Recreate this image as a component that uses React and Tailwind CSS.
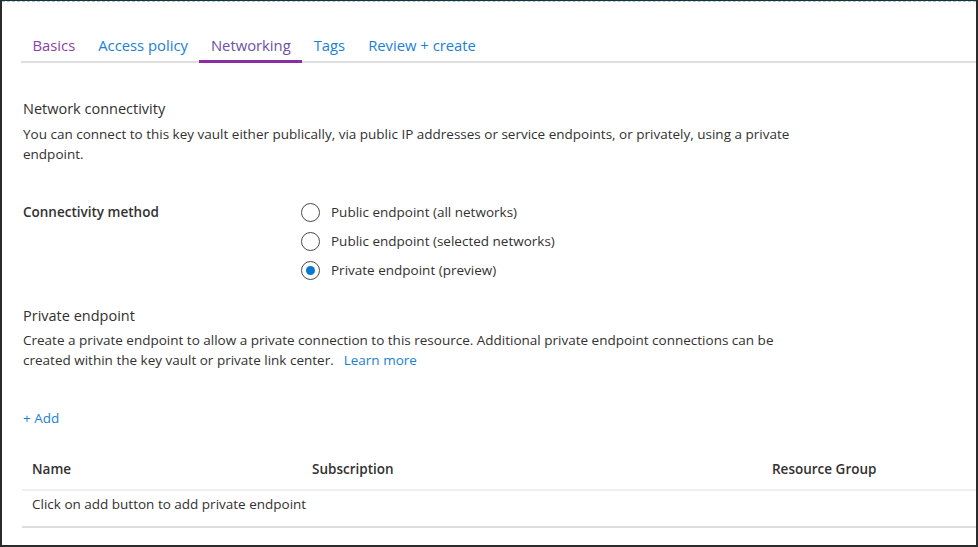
import React from 'react';

const TABS = [
  { label: 'Basics', tone: 'text-[#8b3fa6]' },
  { label: 'Access policy', tone: 'text-[#1a7fd6]' },
  { label: 'Networking', tone: 'text-[#6d4fa8]', active: true },
  { label: 'Tags', tone: 'text-[#1a7fd6]' },
  { label: 'Review + create', tone: 'text-[#1a7fd6]' },
];

const OPTIONS = [
  { label: 'Public endpoint (all networks)', checked: false },
  { label: 'Public endpoint (selected networks)', checked: false },
  { label: 'Private endpoint (preview)', checked: true },
];

function Radio({ checked }) {
  return (
    <span className="flex h-[19px] w-[19px] shrink-0 items-center justify-center rounded-full border border-[#4a4a4a] bg-white">
      {checked ? <span className="h-[9px] w-[9px] rounded-full bg-[#0078d4]" /> : null}
    </span>
  );
}

export default function App() {
  return (
    <div
      className="h-[547px] w-[978px] overflow-hidden border-x-2 border-b-2 border-t border-[#2b2b2b] bg-white text-[#323130]"
      style={{ fontFamily: '"Open Sans", "Noto Sans", sans-serif' }}
    >
      <div className="h-px border-t border-dashed border-[#8ad6e6]" />
      <div className="pl-[19px] pt-[30px]">
        <div className="flex border-b-2 border-[#e1dfdd] text-[14.8px]">
          {TABS.map((tab) => (
            <div
              key={tab.label}
              className={[
                'relative -mb-[2px] px-[11.5px] pb-[5px] pt-[3px] leading-[20px]',
                tab.active ? 'border-b-[3px] border-[#8a2da5]' : 'border-b-2 border-transparent',
                tab.tone,
              ].join(' ')}
            >
              {tab.label}
            </div>
          ))}
        </div>
      </div>

      <div className="pl-[21px] pr-6 text-[13.5px] leading-[20px]">
        <h2 className="mt-[36px] text-[14.5px] leading-[20px]">Network connectivity</h2>
        <p className="mt-[5px] max-w-[790px]">
          You can connect to this key vault either publically, via public IP addresses or service endpoints, or privately, using a private endpoint.
        </p>

        <div className="mt-[38px] flex">
          <div className="w-[278px] font-semibold">Connectivity method</div>
          <div className="flex flex-col gap-[9px]">
            {OPTIONS.map((opt) => (
              <label key={opt.label} className="flex items-center gap-[11px]">
                <Radio checked={opt.checked} />
                <span>{opt.label}</span>
              </label>
            ))}
          </div>
        </div>

        <h2 className="mt-[26px] text-[14.5px]">Private endpoint</h2>
        <p className="mt-[4px] max-w-[780px]">
          Create a private endpoint to allow a private connection to this resource. Additional private endpoint connections can be created within the key vault or private link center.
          <span className="ml-[10px] text-[#1a7fd6]">Learn more</span>
        </p>

        <div className="mt-[38px] text-[#1a7fd6]">+ Add</div>
      </div>

      <div className="ml-[20px] mt-[31px] text-[13.5px] leading-[20px]">
        <div className="grid grid-cols-[280px_460px_1fr] border-b-2 border-[#efefef] pb-[10px] pl-[10px] font-semibold">
          <div>Name</div>
          <div>Subscription</div>
          <div>Resource Group</div>
        </div>
        <div className="border-b-2 border-[#dcdcdc] pb-[12px] pl-[10px] pt-[3px]">
          Click on add button to add private endpoint
        </div>
      </div>
    </div>
  );
}
